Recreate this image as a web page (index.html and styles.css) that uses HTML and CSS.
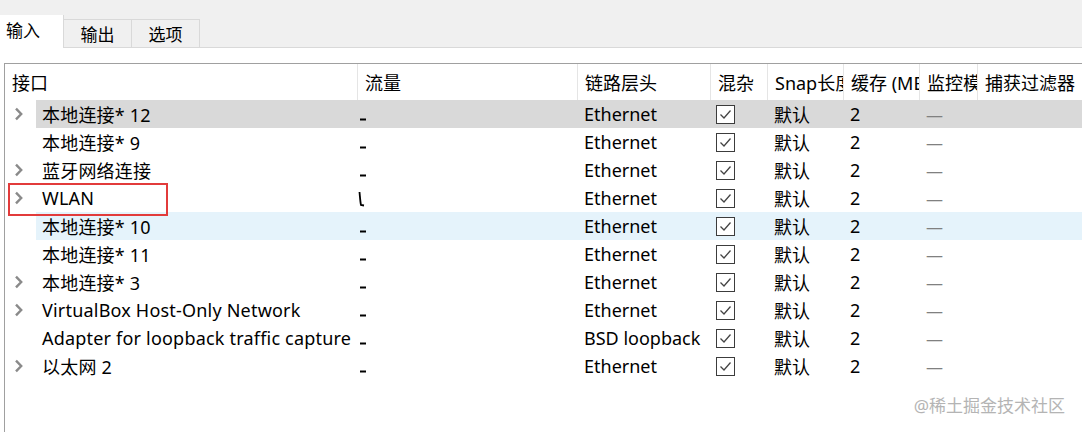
FILE: index.html
```html
<!DOCTYPE html>
<html lang="zh-CN">
<head>
<meta charset="utf-8">
<title>捕获接口</title>
<link rel="stylesheet" href="styles.css">
</head>
<body>
<div class="tabbar">
  <div class="tab active">输入</div>
  <div class="tab">输出</div>
  <div class="tab">选项</div>
  <div class="tabfill"></div>
</div>
<div class="content">
  <div class="frame">
    <div class="row head">
      <div class="c c1"><span class="ht">接口</span></div>
      <div class="c c2"><span class="ht">流量</span></div>
      <div class="c c3"><span class="ht">链路层头</span></div>
      <div class="c c4"><span class="ht">混杂</span></div>
      <div class="c c5"><span class="ht">Snap长度</span></div>
      <div class="c c6"><span class="ht">缓存 (MB)</span></div>
      <div class="c c7"><span class="ht">监控模式</span></div>
      <div class="c c8"><span class="ht">捕获过滤器</span></div>
    </div>
    <div class="body" id="body"></div>
  </div>
  <div class="mark">@稀土掘金技术社区</div>
</div>
<script src="app.js"></script>
</body>
</html>
```

FILE: app.js
```js
var rows = [
  ["本地连接* 12", true, "Ethernet", "sel"],
  ["本地连接* 9", false, "Ethernet", ""],
  ["蓝牙网络连接", true, "Ethernet", ""],
  ["WLAN", true, "Ethernet", "wlan"],
  ["本地连接* 10", false, "Ethernet", "hover"],
  ["本地连接* 11", false, "Ethernet", ""],
  ["本地连接* 3", true, "Ethernet", ""],
  ["VirtualBox Host-Only Network", true, "Ethernet", ""],
  ["Adapter for loopback traffic capture", false, "BSD loopback", ""],
  ["以太网 2", true, "Ethernet", ""]
];
var chev = '<svg class="chev" width="10" height="14" viewBox="0 0 10 14"><path d="M2 1.6 L7.2 7 L2 12.4" fill="none" stroke="#8a8a8a" stroke-width="2.4"/></svg>';
var dash = '<svg class="spark" width="12" height="28" viewBox="0 0 12 28"><path d="M3 19.5 H9" stroke="#000" stroke-width="2"/></svg>';
var wave = '<svg class="spark" width="12" height="28" viewBox="0 0 12 28"><path d="M2.5 8 C3 13 3.3 18 4 21 L7 21.5" fill="none" stroke="#000" stroke-width="1.8"/></svg>';
var check = '<span class="cb"><svg width="19" height="19" viewBox="0 0 19 19"><rect x="0.5" y="0.5" width="18" height="18" fill="#fff" stroke="#3c3c3c"/><path d="M4.5 9.5 L8 13 L14.5 5.5" fill="none" stroke="#444" stroke-width="1.3"/></svg></span>';
var html = "";
rows.forEach(function (r) {
  var cls = r[3] === "sel" ? " sel" : r[3] === "hover" ? " hover" : r[3] === "wlan" ? " boxed" : "";
  html += '<div class="row item' + cls + '">' +
    '<div class="c c1"><span class="arrow">' + (r[1] ? chev : "") + '</span>' +
    '<span class="name">' + r[0] + '</span></div>' +
    '<div class="c c2">' + (r[3] === "wlan" ? wave : dash) + '</div>' +
    '<div class="c c3">' + r[2] + '</div>' +
    '<div class="c c4">' + check + '</div>' +
    '<div class="c c5">默认</div>' +
    '<div class="c c6">2</div>' +
    '<div class="c c7"><span class="dash">—</span></div>' +
    '<div class="c c8"></div>' +
    '</div>';
});
document.getElementById("body").innerHTML = html;
```

FILE: styles.css
```css
* { box-sizing: border-box; }
html, body { margin: 0; padding: 0; }
body {
  width: 1082px;
  height: 432px;
  overflow: hidden;
  background: #fff;
  font-family: "Noto Sans", "Noto Sans CJK SC", sans-serif;
  font-size: 18px;
  color: #000;
}
.tabbar {
  display: flex;
  align-items: flex-end;
  height: 48px;
  background: #f0f0f0;
  font-size: 17px;
}
.tab {
  height: 29px;
  border: 1px solid #d9d9d9;
  border-left: none;
  background: #f0f0f0;
  display: flex;
  align-items: center;
  line-height: 1;
  width: 68px;
  justify-content: center;
  padding-top: 2px;
}
.tab.active {
  width: 64px;
  height: 33px;
  background: #fff;
  border-bottom: none;
  border-top: none;
  padding: 0 0 2px 6px;
  justify-content: flex-start;
}
.tabfill {
  flex: 1;
  height: 1px;
  background: #d9d9d9;
}
.content {
  position: relative;
  height: 384px;
  padding: 15px 0 0 4px;
}
.frame {
  border: 1px solid #a0a0a0;
  border-right: none;
  border-bottom: none;
  height: 369px;
}
.row {
  display: grid;
  grid-template-columns: 352px 220px 133px 57px 76px 76px 58px 1fr;
  white-space: nowrap;
}
.head { height: 36px; }
.head .c {
  display: flex;
  align-items: center;
  padding-left: 7px;
  border-left: 1px solid #e5e5e5;
  min-width: 0;
  overflow: hidden;
}
.head .c1 { border-left: none; }
.ht {
  display: block;
  overflow: hidden;
  min-width: 0;
  max-width: 100%;
}
.item { height: 28px; position: relative; }
.item .c {
  display: flex;
  align-items: center;
  padding-left: 7px;
  overflow: hidden;
}
.item .c1 { padding-left: 0; }
.item.sel .c { background: #d9d9d9; }
.item.hover .c { background: #e5f3fb; }
.arrow {
  width: 31px;
  height: 28px;
  flex: none;
  display: flex;
  align-items: center;
  padding-left: 9px;
  background: #fff;
}
.name { padding-left: 6px; letter-spacing: 0.2px; }
.boxed::after {
  content: "";
  position: absolute;
  left: 3px;
  top: -1px;
  width: 156px;
  height: 29px;
  border: 2px solid #e23b3b;
  z-index: 5;
}
.item .c2 { padding-left: 0; }
.spark { display: block; }
.item .c4 { padding-left: 6px; }
.cb { display: flex; }
.dash { color: #808080; font-size: 17px; }
.mark {
  position: absolute;
  right: 17px;
  bottom: 15px;
  color: #b4b4b4;
  font-size: 17px;
}
```
